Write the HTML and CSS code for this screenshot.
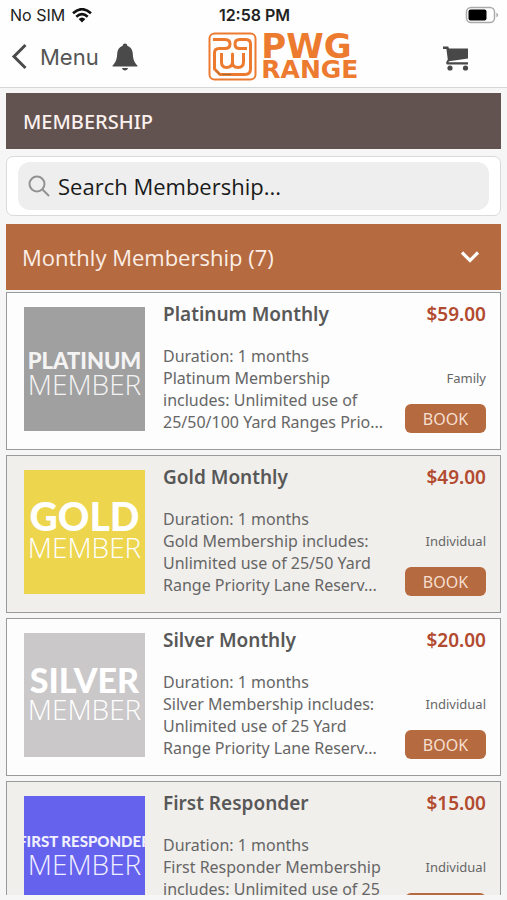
FILE: index.html
```html
<!DOCTYPE html>
<html lang="en">
<head>
<meta charset="utf-8">
<meta name="viewport" content="width=device-width, initial-scale=1">
<title>PWG Range Membership</title>
<link rel="stylesheet" href="styles.css">
</head>
<body>
<div class="status">
  <span class="carrier">No SIM
    <svg width="20" height="15" viewBox="0 0 20 15" aria-hidden="true"><g fill="none" stroke="#111" stroke-width="2.6"><path d="M1 5.2Q10-2.8 19 5.2"/><path d="M4.300 8.700Q10 3.500 15.700 8.700"/></g><path fill="#111" d="M6.600 11Q10 8 13.400 11L10 14.600Z"/></svg>
  </span>
  <span class="clock">12:58 PM</span>
  <svg class="battery" width="34" height="18" viewBox="0 0 34 18" aria-hidden="true"><rect x="1.500" y="1.500" width="28" height="15" rx="4.500" fill="#fff" stroke="#aaa" stroke-width="1.500"/><rect x="3.500" y="3.500" width="18" height="11" rx="2" fill="#000"/><path d="M31.500 6.500q3 2.500 0 5z" fill="#999"/></svg>
</div>
<header class="nav">
  <div class="nav-left">
    <button class="menu" type="button">
      <svg width="17" height="27" viewBox="0 0 17 27" aria-hidden="true"><path d="M14.500 2L3 13.500L14.500 25" fill="none" stroke="#4a4a4a" stroke-width="3"/></svg>Menu
    </button>
    <button class="bell" type="button" aria-label="Notifications">
      <svg width="26" height="28" viewBox="0 0 26 28" aria-hidden="true"><path fill="#4a4a4a" d="M13 0.500c1.400 0 2.200.8 2.300 2.200c3.600 1.200 5.300 4 5.500 7.800c.2 4.800 1 8.500 4.600 12v1H.6v-1c3.600-3.500 4.400-7.200 4.600-12c.2-3.800 1.900-6.600 5.500-7.800C10.800 1.300 11.600.5 13 .5zM10 25h6c-.3 1.600-1.400 2.500-3 2.500s-2.700-.9-3-2.500z"/></svg>
    </button>
  </div>
  <a class="logo" href="#">
    <svg width="50" height="50" viewBox="0 0 50 50" aria-hidden="true"><g fill="none" stroke="#ec7b30" stroke-linejoin="round"><rect x="1.500" y="1.500" width="46" height="46" rx="5" stroke-width="2"/><g stroke-width="3"><path d="M5 7.500H17Q22 7.500 22 12T17 16.500H11Q6.500 16.500 6.500 21V37L12 42.500H37Q42.500 42.500 42.500 37V12Q42.500 7.500 38 7.500H31.500Q27 7.500 27 12T31.500 16.500H39"/><path d="M13.500 21V30Q13.500 35.500 18.500 35.500T24.500 30.500V22V30.500Q24.500 35.500 30 35.500T35.500 30V21"/></g></g><path d="M8 38.500l4 4M14 42.500h9" stroke="#9a6b35" stroke-width="1"/></svg>
    <span class="wordmark"><b class="word-top">PWG</b><b class="word-bottom">RANGE</b></span>
  </a>
  <button class="cart" type="button" aria-label="Cart">
    <svg width="26" height="25" viewBox="0 0 26 25" aria-hidden="true"><path fill="#484848" d="M0 .5H5.200L6 2.500H25V12.500L6 15.300L5.400 16.300H25V18.500H4.500Q2.500 18 3.500 15.500L4.800 13.500L3.400 3H0z"/><circle cx="7" cy="22" r="2.600" fill="#484848"/><circle cx="22.500" cy="22" r="2.600" fill="#484848"/></svg>
  </button>
</header>
<main class="page">
  <h1 class="title">MEMBERSHIP</h1>
  <div class="search">
    <label class="field">
      <svg width="22" height="22" viewBox="0 0 22 22" aria-hidden="true"><g fill="none" stroke="#929292" stroke-width="2"><circle cx="9" cy="9" r="7.500"/><path d="M14.500 14.500L21 21"/></g></svg>
      <input type="text" placeholder="Search Membership..." aria-label="Search Membership">
    </label>
  </div>
  <button class="group" type="button" aria-expanded="true">Monthly Membership (7)
    <svg width="20" height="14" viewBox="0 0 20 14" aria-hidden="true"><path d="M2 2.500L10 10.500L18 2.500" fill="none" stroke="#fff" stroke-width="3.200"/></svg>
  </button>
  <section class="list">
    <article class="card">
      <div class="thumb platinum"><b>PLATINUM</b><span>MEMBER</span></div>
      <div class="info"><h2>Platinum Monthly</h2><p>Duration: 1 months</p><p>Platinum Membership includes: Unlimited use of 25/50/100 Yard Ranges Prio...</p></div>
      <div class="side"><strong>$59.00</strong><span>Family</span><button type="button">BOOK</button></div>
    </article>
    <article class="card">
      <div class="thumb gold"><b>GOLD</b><span>MEMBER</span></div>
      <div class="info"><h2>Gold Monthly</h2><p>Duration: 1 months</p><p>Gold Membership includes: Unlimited use of 25/50 Yard Range Priority Lane Reserv...</p></div>
      <div class="side"><strong>$49.00</strong><span>Individual</span><button type="button">BOOK</button></div>
    </article>
    <article class="card">
      <div class="thumb silver"><b>SILVER</b><span>MEMBER</span></div>
      <div class="info"><h2>Silver Monthly</h2><p>Duration: 1 months</p><p>Silver Membership includes: Unlimited use of 25 Yard Range Priority Lane Reserv...</p></div>
      <div class="side"><strong>$20.00</strong><span>Individual</span><button type="button">BOOK</button></div>
    </article>
    <article class="card">
      <div class="thumb responder"><b>FIRST RESPONDER</b><span>MEMBER</span></div>
      <div class="info"><h2>First Responder</h2><p>Duration: 1 months</p><p>First Responder Membership includes: Unlimited use of 25</p></div>
      <div class="side"><strong>$15.00</strong><span>Individual</span><button type="button">BOOK</button></div>
    </article>
  </section>
</main>
</body>
</html>
```
FILE: styles.css
```css
* { box-sizing: border-box; }
body {
  margin: 0;
  height: 100vh;
  display: flex;
  flex-direction: column;
  overflow: hidden;
  background: #f7f6f6;
  color: #666;
  font-family: "Noto Sans", "Open Sans", sans-serif;
}
button { border: 0; padding: 0; background: none; font: inherit; color: inherit; }
h1, h2, p { margin: 0; }
svg { display: block; flex: none; }

.status {
  display: grid;
  grid-template-columns: 1fr auto 1fr;
  align-items: center;
  height: 30px;
  padding: 0 8px 0 10px;
  background: #fefefe;
  color: #222;
  font: 16px/28px Inter, sans-serif;
}
.carrier { display: flex; align-items: center; gap: 7px; }
.clock { font-weight: 600; }
.battery { justify-self: end; }

.nav {
  display: flex;
  align-items: center;
  justify-content: space-between;
  height: 58px;
  padding: 0 38px 4px 11px;
  background: #fefefe;
  border-bottom: 1px solid #d4d6d8;
}
.nav-left { display: flex; align-items: center; gap: 13px; }
.menu {
  display: flex;
  align-items: center;
  gap: 12px;
  color: #555;
  font: 22px/28px Inter, sans-serif;
}
.logo { display: flex; align-items: center; gap: 3px; margin-right: 14px; color: #ec7b30; text-decoration: none; }
.wordmark { display: flex; flex-direction: column; font-family: "DejaVu Sans", sans-serif; }
.word-top { font-size: 34px; line-height: 26px; }
.word-bottom { font-size: 25px; line-height: 22px; }
.cart { margin-top: 4px; }

.page { flex: 1; min-height: 0; overflow: hidden; margin: 0 6px 5px; padding-top: 5px; }
.title {
  height: 56px;
  padding: 0 17px;
  background: #635350;
  color: #fbf1ee;
  font-size: 20px;
  line-height: 57px;
  font-weight: 500;
}
.search {
  margin: 7px 0 8px;
  padding: 5px 11px;
  background: #fff;
  border: 1px solid #dadada;
  border-radius: 7px;
}
.field {
  display: flex;
  align-items: center;
  gap: 8px;
  height: 48px;
  padding: 0 10px;
  background: #eee;
  border-radius: 12px;
}
.field input { flex: 1; min-width: 0; padding: 0; border: 0; outline: 0; background: none; color: #111; font: 22px/28px "Open Sans", sans-serif; }
.field input::placeholder { color: #1a1a1a; opacity: 1; }
.group {
  display: flex;
  align-items: center;
  justify-content: space-between;
  width: 100%;
  height: 66px;
  padding: 0 21px 0 16px;
  background: #b56a3f;
  color: #fbeee6;
  font-family: "Open Sans", sans-serif;
  font-size: 22px;
}

.list { display: flex; flex-direction: column; gap: 5px; padding-top: 2px; }
.card {
  display: grid;
  grid-template-columns: 121px minmax(0, 1fr) 81px;
  align-items: start;
  min-height: 158px;
  padding: 9px 14px 14px 17px;
  background: #fdfdfd;
  border: 1px solid #999a9c;
}
.card:nth-child(even) { background: #f1efec; }
.thumb {
  display: flex;
  flex-direction: column;
  align-items: center;
  height: 124px;
  margin-top: 5px;
  overflow: hidden;
  color: #fff;
  font-family: "Open Sans", sans-serif;
  white-space: nowrap;
}
.thumb b { font-family: Lato, sans-serif; font-weight: 900; }
.thumb span { font-size: 28px; line-height: 24px; font-weight: 300; }
.platinum { padding-top: 43px; background: #a0a0a0; color: #f4f4f4; }
.platinum b { font-size: 22px; line-height: 22px; }
.gold { padding-top: 28px; background: #edd54e; }
.gold b { font-size: 39px; line-height: 37px; }
.silver { padding-top: 30px; background: #cac8c9; }
.silver b { font-size: 34px; line-height: 34px; }
.responder { padding-top: 34px; background: #6562ee; color: #f0f0ff; }
.responder b { font-size: 15px; line-height: 22px; }

.info { padding: 0 20px 0 18px; font-size: 16px; line-height: 22px; }
.info h2 { margin-bottom: 19px; color: #585858; font-size: 19px; line-height: 24px; font-weight: 600; }
.side { display: flex; flex-direction: column; align-items: flex-end; }
.side strong { color: #b24a2f; font-size: 19px; line-height: 24px; font-weight: 600; }
.side span { margin: 44px 0 18px; font-size: 13px; line-height: 16px; }
.side button {
  width: 100%;
  height: 29px;
  border-radius: 6px;
  background: #b56a3f;
  color: #f6dfd0;
  font-size: 16px;
}
```
